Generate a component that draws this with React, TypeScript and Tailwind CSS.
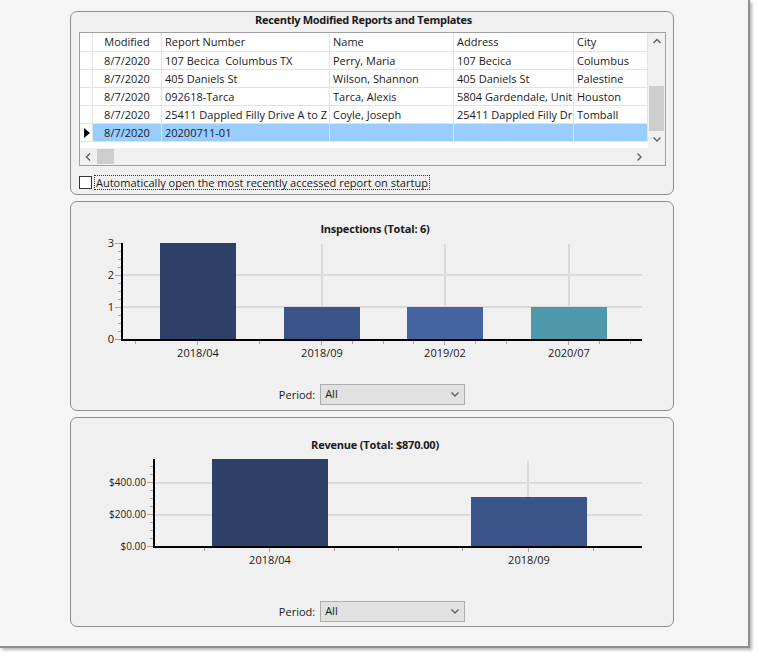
import React from 'react';

const rows = [
  ['8/7/2020', '107 Becica  Columbus TX', 'Perry, Maria', '107 Becica', 'Columbus'],
  ['8/7/2020', '405 Daniels St', 'Wilson, Shannon', '405 Daniels St', 'Palestine'],
  ['8/7/2020', '092618-Tarca', 'Tarca, Alexis', '5804 Gardendale, Unit', 'Houston'],
  ['8/7/2020', '25411 Dappled Filly Drive A to Z', 'Coyle, Joseph', '25411 Dappled Filly Dr', 'Tomball'],
  ['8/7/2020', '20200711-01', '', '', ''],
];

const headers = ['Modified', 'Report Number', 'Name', 'Address', 'City'];
const colClass = [
  'w-[69px] text-center',
  'w-[168px] pl-[3px]',
  'w-[124px] pl-[3px]',
  'w-[120px] pl-[3px]',
  'w-[74px] pl-[3px]',
];

const Chevron = ({ dir }: { dir: 'up' | 'down' | 'left' | 'right' }) => {
  const pts = {
    up: '0.5,5 4,1.5 7.5,5',
    down: '0.5,1.5 4,5 7.5,1.5',
    left: '5,0.5 1.5,4 5,7.5',
    right: '1.5,0.5 5,4 1.5,7.5',
  }[dir];
  const vertical = dir === 'up' || dir === 'down';
  return (
    <svg width={vertical ? 8 : 7} height={vertical ? 7 : 8} className="block">
      <polyline points={pts} fill="none" stroke="#606060" strokeWidth="1.4" />
    </svg>
  );
};

const ReportsGrid = () => (
  <div className="ml-[8px] mt-[5px] w-[587px] h-[134px] border border-[#a0a0a0] bg-white flex flex-col">
    <div className="flex h-[115px]">
      <div className="w-[568px] flex flex-col">
        {/* header */}
        <div className="flex h-[19px] border-b border-[#e3e3e3] leading-[18px]">
          <div className="w-[13px] border-r border-[#e3e3e3]" />
          {headers.map((h, i) => (
            <div key={h} className={`${colClass[i]} border-r border-[#e3e3e3] overflow-hidden whitespace-pre`}>
              {h}
            </div>
          ))}
        </div>
        {rows.map((r, ri) => {
          const selected = ri === rows.length - 1;
          return (
            <div key={ri} className="flex h-[18px] leading-[17px]">
              <div className="w-[13px] border-r border-b border-[#e3e3e3] flex items-center pl-[4px]">
                {selected && (
                  <svg width="6" height="10" className="block">
                    <polygon points="0,0 6,5 0,10" fill="#000" />
                  </svg>
                )}
              </div>
              {r.map((c, ci) => (
                <div
                  key={ci}
                  className={`${colClass[ci]} border-r border-b border-[#e3e3e3] overflow-hidden whitespace-pre ${
                    selected ? 'bg-[#99ccff]' : ''
                  }`}
                >
                  {c}
                </div>
              ))}
            </div>
          );
        })}
        <div className="flex-1" />
      </div>
      {/* vertical scrollbar */}
      <div className="w-[17px] bg-[#f0f0f0] flex flex-col items-center">
        <div className="h-[17px] flex items-center justify-center">
          <Chevron dir="up" />
        </div>
        <div className="h-[36px]" />
        <div className="h-[45px] w-[15px] bg-[#cdcdcd]" />
        <div className="flex-1" />
        <div className="h-[17px] flex items-center justify-center">
          <Chevron dir="down" />
        </div>
      </div>
    </div>
    {/* horizontal scrollbar */}
    <div className="flex h-[17px] bg-[#f0f0f0]">
      <div className="w-[17px] flex items-center justify-center">
        <Chevron dir="left" />
      </div>
      <div className="w-[17px] h-[15px] mt-[1px] bg-[#cdcdcd]" />
      <div className="flex-1" />
      <div className="w-[17px] flex items-center justify-center">
        <Chevron dir="right" />
      </div>
      <div className="w-[17px]" />
    </div>
  </div>
);

type Bar = { x: number; y: number; w: number; h: number; c: string };

type ChartProps = {
  axisX: number;
  axisBottom: number;
  bars: Bar[];
  hGrid: number[];
  vGrid: number[];
  yLabels: { y: number; t: string }[];
  yFont: number;
  yMinor: number[];
  xTicks: number[];
  xMajor: number[];
  xLabels: { x: number; t: string }[];
};

const Chart = ({ axisX, axisBottom, bars, hGrid, vGrid, yLabels, yFont, yMinor, xTicks, xMajor, xLabels }: ChartProps) => (
  <svg width="602" height="128" className="block">
    {hGrid.map(y => (
      <rect key={`h${y}`} x={axisX + 2} y={y} width={571 - axisX - 2} height="2" fill="#dadada" />
    ))}
    {vGrid.map(x => (
      <rect key={`v${x}`} x={x} y="8" width="2" height={axisBottom - 8} fill="#dadada" />
    ))}
    {bars.map((b, i) => (
      <rect key={i} x={b.x} y={b.y} width={b.w} height={b.h} fill={b.c} />
    ))}
    {yMinor.map(y => (
      <rect key={`m${y}`} x={axisX - 3} y={y} width="3" height="1" fill="#a6a6a6" />
    ))}
    {yLabels.map(l => (
      <g key={l.t}>
        <rect x={axisX - 6} y={l.y} width="6" height="1" fill="#a6a6a6" />
        <text x={axisX - 7} y={l.y + 4} fontSize={yFont} textAnchor="end" fill="#1a1a1a">
          {l.t}
        </text>
      </g>
    ))}
    {xTicks.map(x => (
      <rect
        key={`x${x}`}
        x={x}
        y={axisBottom + 2}
        width="1"
        height={xMajor.includes(x) ? 4 : 3}
        fill="#a6a6a6"
      />
    ))}
    <rect x={axisX} y="7" width="2" height={axisBottom - 5} fill="#000" />
    <rect x={axisX} y={axisBottom} width={571 - axisX} height="2" fill="#000" />
    {xLabels.map(l => (
      <text key={l.t} x={l.x} y={axisBottom + 18} fontSize="11" textAnchor="middle" fill="#1a1a1a">
        {l.t}
      </text>
    ))}
  </svg>
);

const PeriodSelect = ({ mt }: { mt: string }) => (
  <div className={`${mt} flex items-center justify-center gap-[5px]`}>
    <span className="leading-[21px]">Period:</span>
    <div className="w-[145px] h-[21px] border border-[#adadad] bg-[#e1e1e1] flex items-center justify-between pl-[4px] pr-[5px]">
      <span>All</span>
      <Chevron dir="down" />
    </div>
  </div>
);

export default function App() {
  return (
    <div className="min-h-screen bg-white font-['Open_Sans',sans-serif] text-[11px] text-[#1a1a1a]">
      <div className="w-[750px] h-[648px] bg-[#f5f5f5] border-r-2 border-b-2 border-[#8e8e8e] shadow-[2px_2px_3px_rgba(0,0,0,0.3)] pl-[70px] pt-[11px] flex flex-col gap-[6px]">
        {/* Recent reports */}
        <div className="w-[604px] h-[184px] border border-[#8e8e8e] rounded-[7px] bg-[#f0f0f0] flex flex-col">
          <div className="pr-[17px] text-center font-bold leading-[15px] tracking-[-0.3px]">
            Recently Modified Reports and Templates
          </div>
          <ReportsGrid />
          <div className="mt-[9px] ml-[8px] flex items-center">
            <div className="w-[13px] h-[13px] border border-[#333] bg-white" />
            <div className="ml-[2px] h-[15px] border border-dotted border-[#333] px-[1px] leading-[13px]">
              Automatically open the most recently accessed report on startup
            </div>
          </div>
        </div>

        {/* Inspections */}
        <div className="w-[604px] h-[210px] border border-[#8e8e8e] rounded-[7px] bg-[#f0f0f0] flex flex-col">
          <div className="pt-[19px] pl-[6px] text-center font-bold leading-[15px] tracking-[-0.2px]">
            Inspections (Total: 6)
          </div>
          <Chart
            axisX={50}
            axisBottom={103}
            bars={[
              { x: 89, y: 7, w: 76, h: 96, c: '#2d4068' },
              { x: 213, y: 71, w: 76, h: 32, c: '#3a5489' },
              { x: 336, y: 71, w: 76, h: 32, c: '#4463a0' },
              { x: 460, y: 71, w: 76, h: 32, c: '#4e98a9' },
            ]}
            hGrid={[38, 70]}
            vGrid={[126, 250, 373, 497]}
            yLabels={[
              { y: 7, t: '3' },
              { y: 39, t: '2' },
              { y: 71, t: '1' },
              { y: 103, t: '0' },
            ]}
            yFont={11}
            yMinor={[15, 23, 31, 47, 55, 63, 79, 87, 95]}
            xTicks={[64, 126, 188, 250, 281, 312, 342, 373, 404, 435, 497, 528, 559]}
            xMajor={[126, 250, 373, 497]}
            xLabels={[
              { x: 127, t: '2018/04' },
              { x: 251, t: '2018/09' },
              { x: 374, t: '2019/02' },
              { x: 498, t: '2020/07' },
            ]}
          />
          <PeriodSelect mt="mt-[20px]" />
        </div>

        {/* Revenue */}
        <div className="w-[604px] h-[210px] border border-[#8e8e8e] rounded-[7px] bg-[#f0f0f0] flex flex-col">
          <div className="pt-[19px] pl-[6px] text-center font-bold leading-[15px] tracking-[-0.2px]">
            Revenue (Total: $870.00)
          </div>
          <Chart
            axisX={82}
            axisBottom={94}
            bars={[
              { x: 141, y: 7, w: 116, h: 87, c: '#2d4068' },
              { x: 400, y: 45, w: 116, h: 49, c: '#3a5489' },
            ]}
            hGrid={[30, 62]}
            vGrid={[456]}
            yLabels={[
              { y: 30, t: '$400.00' },
              { y: 62, t: '$200.00' },
              { y: 94, t: '$0.00' },
            ]}
            yFont={10}
            yMinor={[14, 22, 38, 46, 54, 70, 78, 86]}
            xTicks={[133, 198, 263, 327, 391, 457, 522]}
            xMajor={[198, 457]}
            xLabels={[
              { x: 199, t: '2018/04' },
              { x: 458, t: '2018/09' },
            ]}
          />
          <PeriodSelect mt="mt-[21px]" />
        </div>
      </div>
    </div>
  );
}
